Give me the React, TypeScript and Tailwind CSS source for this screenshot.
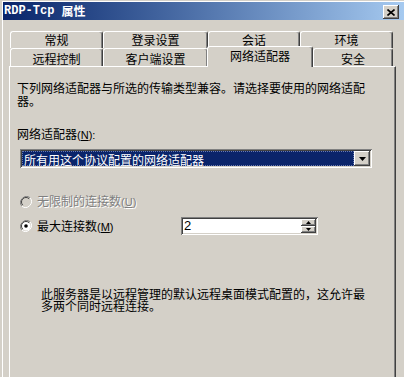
import React from 'react';

const cjk = '"Noto Sans CJK SC", "Liberation Sans", sans-serif';

const raised =
  'shadow-[inset_-1px_-1px_#404040,inset_1px_1px_#ffffff,inset_-2px_-2px_#808080,inset_2px_2px_#d4d0c8]';
const sunken =
  'shadow-[inset_1px_1px_#808080,inset_-1px_-1px_#ffffff,inset_2px_2px_#404040,inset_-2px_-2px_#d4d0c8]';

function Tab({ label, w, selected, back }: { label: string; w: string; selected?: boolean; back?: boolean }) {
  if (selected) {
    return (
      <div
        className={`${w} -ml-[1px] -mt-[2px] h-[21px] relative z-10 bg-[#d4d0c8] border-t border-l border-white border-r border-r-[#404040] rounded-t-[3px] shadow-[inset_-1px_0_#808080] text-center text-[12px] leading-[13px] pt-[2px] text-black`}
      >
        {label}
      </div>
    );
  }
  return (
    <div
      className={`${w} h-full overflow-hidden bg-[#d4d0c8] border-t border-l border-white border-r border-r-[#404040] rounded-t-[3px] shadow-[inset_-1px_0_#808080] text-center text-[12px] leading-[13px] ${back ? 'pt-[1px]' : 'pt-[3px]'} text-black`}
    >
      {label}
    </div>
  );
}

function Radio({ checked, disabled }: { checked?: boolean; disabled?: boolean }) {
  return (
    <svg width="12" height="12" viewBox="0 0 12 12" className="shrink-0">
      <path d="M10.2 1.8A6 6 0 0 0 1.8 10.2" fill="none" stroke="#808080" strokeWidth="1" />
      <path d="M1.8 10.2A6 6 0 0 0 10.2 1.8" fill="none" stroke="#ffffff" strokeWidth="1" />
      <circle cx="6" cy="6" r="4.5" fill={disabled ? '#d4d0c8' : '#ffffff'} />
      <path d="M9.2 2.8A4.5 4.5 0 0 0 2.8 9.2" fill="none" stroke="#404040" strokeWidth="1" />
      {checked && <circle cx="6" cy="6" r="1.8" fill="#000000" />}
    </svg>
  );
}

export default function App() {
  return (
    <div
      className="w-[404px] h-[377px] overflow-hidden bg-[#d4d0c8] pl-[2px] pt-[1px]"
      style={{ fontFamily: cjk }}
    >
      <div className="h-[400px] w-[420px] border-l border-t border-white">
        {/* title bar */}
        <div className="h-[18px] w-[401px] flex items-center justify-between bg-gradient-to-r from-[#0a246a] to-[#a6caf0] pl-[1px] pr-[5px]">
          <div className="text-white font-bold text-[12px] leading-[14px] flex items-center">
            <span style={{ fontFamily: '"Liberation Mono", monospace' }}>RDP-Tcp</span>
            <span className="ml-[7px]">属性</span>
          </div>
          <div className={`w-[16px] h-[14px] bg-[#d4d0c8] ${raised} flex items-center justify-center mt-[2px]`}>
            <svg width="8" height="7" viewBox="0 0 8 7">
              <path d="M0.5 0.5L7.5 6.5M7.5 0.5L0.5 6.5" stroke="#000" strokeWidth="1.6" />
            </svg>
          </div>
        </div>

        {/* tabs */}
        <div className="ml-[6px] mt-[11px] w-[387px]">
          <div className="ml-[1px] flex h-[17px]">
            <Tab label="常规" w="w-[93px]" back />
            <Tab label="登录设置" w="w-[105px]" back />
            <Tab label="会话" w="w-[92px]" back />
            <Tab label="环境" w="w-[93px]" back />
          </div>
          <div className="ml-[1px] flex items-start h-[18px]">
            <Tab label="远程控制" w="w-[93px]" />
            <Tab label="客户端设置" w="w-[105px]" />
            <Tab label="网络适配器" w="w-[106px]" selected />
            <Tab label="安全" w="w-[80px]" />
          </div>

          {/* panel */}
          <div className="h-[320px] border-l border-t border-white border-r border-r-[#404040] shadow-[inset_-1px_0_#808080] pl-[7px] pt-[14px] text-[12px] text-black">
            <p className="w-[354px] leading-[13px]">
              下列网络适配器与所选的传输类型兼容。请选择要使用的网络适配器。
            </p>

            <div className="mt-[20px] leading-[13px] flex items-baseline">
              <span>网络适配器</span>
              <span className="text-[11px]" style={{ fontFamily: '"Liberation Sans", sans-serif' }}>
                (<span className="underline">N</span>):
              </span>
            </div>

            <div className={`mt-[7px] ml-[3px] w-[352px] h-[19px] bg-white ${sunken} flex p-[2px]`}>
              <div className="flex-1 bg-[#0a246a] text-white leading-[15px] pl-[1px] border border-dotted border-[#6a7bb0]">
                所有用这个协议配置的网络适配器
              </div>
              <div className={`w-[16px] h-[15px] bg-[#d4d0c8] ${raised} flex items-center justify-center`}>
                <svg width="7" height="4" viewBox="0 0 7 4">
                  <path d="M0 0H7L3.5 4Z" fill="#000" />
                </svg>
              </div>
            </div>

            <div className="mt-[27px] ml-[3px] h-[13px] flex items-center">
              <Radio disabled />
              <span className="ml-[5px] leading-[13px] text-[#808080] [text-shadow:1px_1px_0_#ffffff]">
                无限制的连接数
                <span className="text-[11px]" style={{ fontFamily: '"Liberation Sans", sans-serif' }}>
                  (<span className="underline">U</span>)
                </span>
              </span>
            </div>

            <div className="mt-[9px] h-[18px] flex items-center">
              <div className="w-[164px] pl-[3px] flex items-center">
                <Radio checked />
                <span className="ml-[5px] leading-[13px]">
                  最大连接数
                  <span className="text-[11px]" style={{ fontFamily: '"Liberation Sans", sans-serif' }}>
                    (<span className="underline">M</span>)
                  </span>
                </span>
              </div>
              <div className={`w-[137px] h-[18px] bg-white ${sunken} flex p-[2px]`}>
                <div
                  className="flex-1 pl-[1px] text-[13px] leading-[14px]"
                  style={{ fontFamily: '"Liberation Sans", sans-serif' }}
                >
                  2
                </div>
                <div className="w-[15px] flex flex-col">
                  <div className={`h-[7px] bg-[#d4d0c8] ${raised} flex items-center justify-center`}>
                    <svg width="5" height="3" viewBox="0 0 5 3">
                      <path d="M0 3H5L2.5 0Z" fill="#000" />
                    </svg>
                  </div>
                  <div className={`h-[7px] bg-[#d4d0c8] ${raised} flex items-center justify-center`}>
                    <svg width="5" height="3" viewBox="0 0 5 3">
                      <path d="M0 0H5L2.5 3Z" fill="#000" />
                    </svg>
                  </div>
                </div>
              </div>
            </div>

            <p className="mt-[53px] ml-[24px] w-[330px] leading-[12px]">
              此服务器是以远程管理的默认远程桌面模式配置的，这允许最多两个同时远程连接。
            </p>
          </div>
        </div>
      </div>
    </div>
  );
}
